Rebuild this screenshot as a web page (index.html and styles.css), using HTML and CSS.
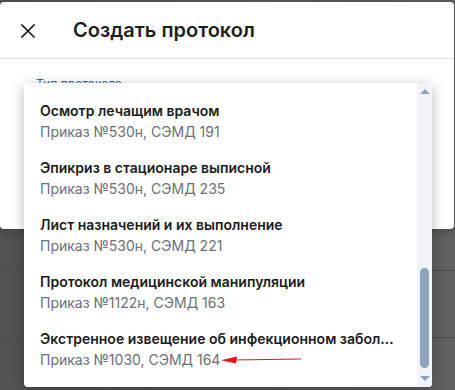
FILE: index.html
```html
<!DOCTYPE html>
<html lang="ru">
<head>
<meta charset="utf-8">
<title>Создать протокол</title>
<link rel="stylesheet" href="styles.css">
</head>
<body>
<div class="backdrop">
  <div class="dialog">
    <div class="dialog-header">
      <button class="close-btn" aria-label="Закрыть">
        <svg width="14" height="14" viewBox="0 0 14 14"><path d="M1 1 L13 13 M13 1 L1 13" stroke="#222" stroke-width="1.7" stroke-linecap="square" fill="none"/></svg>
      </button>
      <h1 class="dialog-title">Создать протокол</h1>
    </div>
    <div class="dialog-body">
      <div class="field">
        <span class="field-label">Тип протокола</span>
        <div class="dropdown">
          <ul class="options">
            <li class="option"><div class="opt-title">Осмотр лечащим врачом</div><div class="opt-sub">Приказ №530н, СЭМД 191</div></li>
            <li class="option"><div class="opt-title">Эпикриз в стационаре выписной</div><div class="opt-sub">Приказ №530н, СЭМД 235</div></li>
            <li class="option"><div class="opt-title">Лист назначений и их выполнение</div><div class="opt-sub">Приказ №530н, СЭМД 221</div></li>
            <li class="option"><div class="opt-title">Протокол медицинской манипуляции</div><div class="opt-sub">Приказ №1122н, СЭМД 163</div></li>
            <li class="option"><div class="opt-title">Экстренное извещение об инфекционном заболевании</div><div class="opt-sub"><span>Приказ №1030, СЭМД 164</span><svg class="arrow" width="82" height="10" viewBox="0 0 82 10"><path d="M12 5 L80 4" stroke="#e8141c" stroke-width="1.2" fill="none"/><path d="M0 5.3 L16 1.5 L15 8.5 Z" fill="#e8141c"/></svg></div></li>
          </ul>
          <div class="scrollbar">
            <span class="sb-arrow up"></span>
            <div class="sb-track"><div class="sb-thumb"></div></div>
            <span class="sb-arrow down"></span>
          </div>
        </div>
      </div>
    </div>
  </div>
</div>
</body>
</html>
```

FILE: styles.css
```css
html, body {
  margin: 0;
  padding: 0;
  width: 455px;
  height: 390px;
  overflow: hidden;
  font-family: Inter, "Noto Sans", sans-serif;
}
.backdrop {
  width: 455px;
  height: 390px;
  padding-top: 2px;
  box-sizing: border-box;
  background-color: #575757;
  background-image:
    linear-gradient(to right, transparent 147px, #4c4c52 147px, #4c4c52 148px, transparent 148px, transparent 317px, #4c4c52 317px, #4c4c52 318px, transparent 318px),
    linear-gradient(to bottom, transparent 270px, #4a4a52 270px, #4a4a52 271px, transparent 271px, transparent 337px, #4a4a52 337px, #4a4a52 338px, transparent 338px),
    linear-gradient(to right, rgba(0,0,0,0.06), rgba(255,255,255,0.06));
}
.dialog {
  position: relative;
  width: 454px;
  height: 227px;
  background: #fff;
  border-radius: 4px;
  box-shadow: 0 2px 10px rgba(0,0,0,0.25);
}
.dialog-header {
  height: 56px;
  display: flex;
  align-items: center;
  padding-left: 21px;
  border-bottom: 1px solid #e0e0e0;
}
.close-btn {
  border: 0;
  background: none;
  padding: 0;
  width: 14px;
  height: 14px;
  display: flex;
  margin-top: 2px;
}
.dialog-title {
  margin: 0 0 0 38px;
  font-size: 20px;
  font-weight: 600;
  color: #1f1f1f;
}
.dialog-body {
  padding: 18px 0 0 36px;
}
.field {
  position: relative;
}
.field-label {
  display: block;
  font-size: 12px;
  line-height: 14px;
  color: #2f6ad9;
}
.dropdown {
  position: absolute;
  left: -12px;
  top: 6px;
  width: 408px;
  height: 304px;
  background: #fff;
  border-radius: 4px;
  box-shadow: 0 3px 14px rgba(0,0,0,0.28);
  display: flex;
  overflow: hidden;
}
.options {
  list-style: none;
  margin: 0;
  padding: 8px 0 0;
  flex: 1;
  min-width: 0;
}
.option {
  padding: 10px 16px 6px 16px;
  height: 41px;
}
.opt-title {
  font-size: 14px;
  line-height: 20px;
  font-weight: 600;
  color: #1c1c1c;
  white-space: nowrap;
  overflow: hidden;
  text-overflow: ellipsis;
}
.opt-sub {
  font-size: 14px;
  line-height: 21px;
  color: #6b7079;
  display: flex;
  align-items: center;
}
.arrow {
  margin-left: 1px;
}
.scrollbar {
  width: 15px;
  background: #f0f4fa;
  display: flex;
  flex-direction: column;
  align-items: center;
}
.sb-arrow {
  width: 0;
  height: 0;
  border-left: 5px solid transparent;
  border-right: 5px solid transparent;
}
.sb-arrow.up {
  border-bottom: 5px solid #8fa3bd;
  margin-top: 6px;
}
.sb-arrow.down {
  border-top: 5px solid #8fa3bd;
  margin-bottom: 6px;
}
.sb-track {
  flex: 1;
  width: 100%;
  display: flex;
  flex-direction: column;
  align-items: center;
  justify-content: flex-end;
  padding-bottom: 8px;
}
.sb-thumb {
  width: 9px;
  height: 100px;
  border-radius: 5px;
  background: #8fa3bd;
}
```
